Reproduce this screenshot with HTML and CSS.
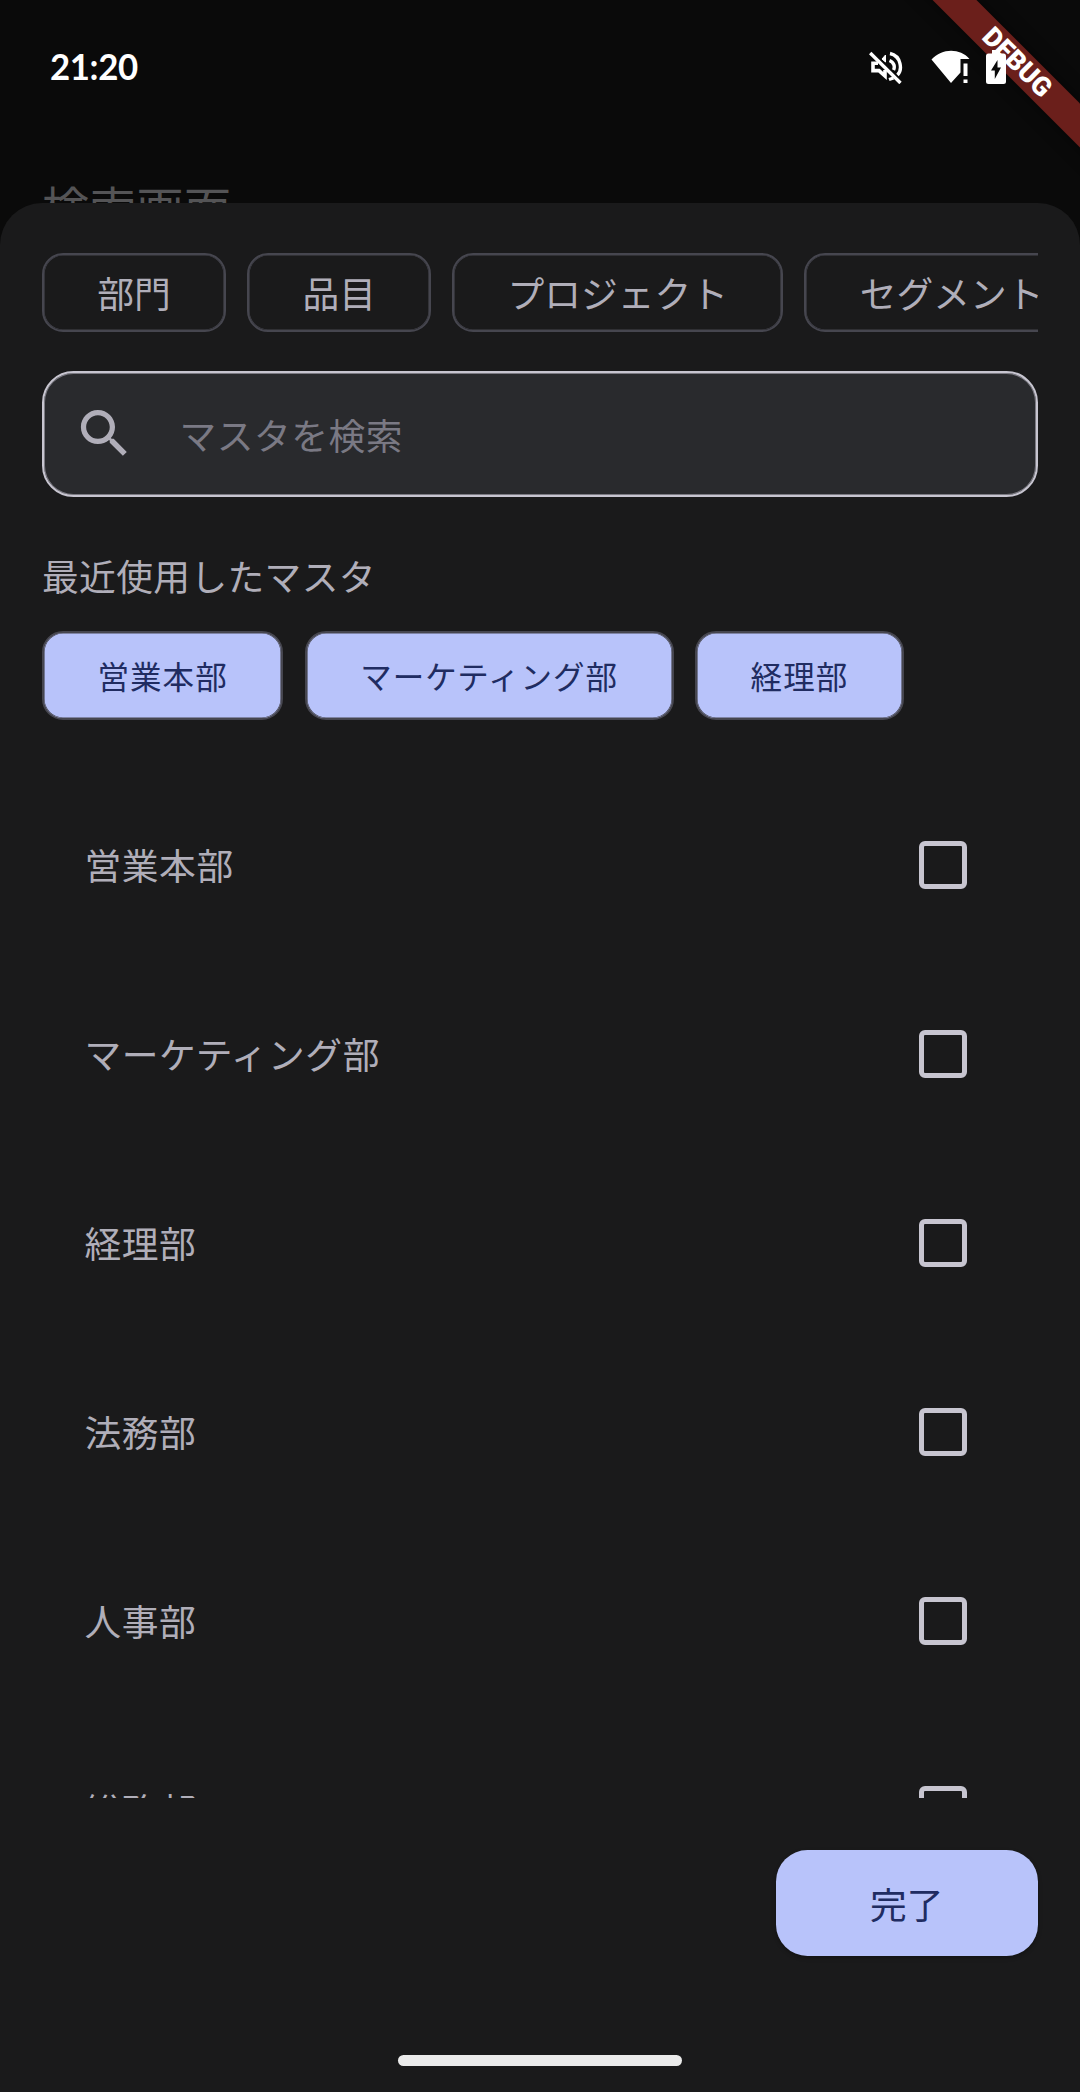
FILE: index.html
```html
<!DOCTYPE html>
<html lang="ja">
<head>
<meta charset="utf-8">
<title>検索画面</title>
<link rel="stylesheet" href="styles.css">
</head>
<body>
<div class="screen">
  <header class="backdrop">
    <div class="status-bar">
      <span class="clock">21:20</span>
      <div class="status-icons">
        <svg class="icon-mute" viewBox="0 0 34 34" width="34" height="34" fill="none" stroke="#fff">
          <path d="M9 13.200H4V20.600H10L16 26V20" stroke-width="3.600"/>
          <path d="M16.500 5V12L13 9Z" fill="#fff" stroke-width="1"/>
          <path d="M21 3.500C32.500 6 33.500 20 28.500 25M20.500 10.500C25.500 12.500 26 17 24.500 20M20 29.500L24.500 28" stroke-width="3.400"/>
          <path d="M1.200 3L31.500 33" stroke-width="3.400"/>
        </svg>
        <svg class="icon-wifi" viewBox="0 0 40 34" width="40" height="34">
          <path fill="#fff" d="M0.500 9.500C11 -2 29 -2 38.500 9H29.500V22.500L20 33Z"/>
          <path fill="#fff" d="M32.500 13.500H36.500V26H32.500ZM32.500 29.500H36.500V33H32.500Z"/>
        </svg>
        <svg class="icon-battery" viewBox="0 0 20 34" width="20" height="34">
          <path fill="#fff" d="M6 0H14V3.500H17.500Q20 3.500 20 6V31.500Q20 34 17.500 34H2.500Q0 34 0 31.500V6Q0 3.500 2.500 3.500H6Z"/>
          <path fill="#0a0a0a" d="M11.500 10L5 20.500H8.800V29L15 17.500H11.500Z"/>
        </svg>
      </div>
    </div>
    <h1 class="page-title">検索画面</h1>
  </header>
  <div class="debug-banner">DEBUG</div>

  <main class="sheet">
    <nav class="tabs">
      <button class="tab">部門</button>
      <button class="tab">品目</button>
      <button class="tab">プロジェクト</button>
      <button class="tab">セグメント</button>
    </nav>
    <label class="search">
      <svg class="search-icon" viewBox="0 0 24 24" width="63" height="63"><path fill="#b0aeb9" d="M15.500 14h-.79l-.28-.27C15.410 12.590 16 11.110 16 9.500 16 5.910 13.090 3 9.500 3S3 5.910 3 9.500 5.910 16 9.500 16c1.610 0 3.090-.59 4.230-1.570l.27.28v.79l5 4.990L20.490 19l-4.990-5zm-6 0C7.010 14 5 11.990 5 9.500S7.010 5 9.500 5 14 7.010 14 9.500 11.990 14 9.500 14z"/></svg>
      <span class="search-hint">マスタを検索</span>
    </label>
    <h2 class="recent-title">最近使用したマスタ</h2>
    <div class="recent">
      <button class="recent-chip">営業本部</button>
      <button class="recent-chip">マーケティング部</button>
      <button class="recent-chip">経理部</button>
    </div>
    <ul class="list">
      <li class="row"><span>営業本部</span><i class="check"></i></li>
      <li class="row"><span>マーケティング部</span><i class="check"></i></li>
      <li class="row"><span>経理部</span><i class="check"></i></li>
      <li class="row"><span>法務部</span><i class="check"></i></li>
      <li class="row"><span>人事部</span><i class="check"></i></li>
      <li class="row"><span>総務部</span><i class="check"></i></li>
    </ul>
    <footer class="actions"><button class="done">完了</button></footer>
    <div class="home-bar"></div>
  </main>
</div>
</body>
</html>
```
FILE: styles.css
```css
* { box-sizing: border-box; }

body {
  margin: 0;
  background: #0a0a0a;
  font-family: "Noto Sans CJK JP", sans-serif;
  font-size: 36.75px;
  line-height: 54px;
  color: #b0aeb9;
}

button {
  font: inherit;
  color: inherit;
  background: none;
  white-space: nowrap;
  flex: none;
}

.screen {
  position: relative;
  width: 1080px;
  height: 2092px;
  overflow: hidden;
  display: flex;
  flex-direction: column;
}

.backdrop { height: 203px; flex: none; overflow: visible; }

.status-bar {
  position: relative;
  z-index: 3;
  height: 132px;
  padding: 0 74px 0 50px;
  display: flex;
  align-items: center;
  justify-content: space-between;
}

.clock {
  font: 700 37px/40px Lato, sans-serif;
  letter-spacing: -.4px;
  transform: scaleX(.94);
  transform-origin: left;
  color: #fff;
}

.status-icons { display: flex; padding-top: 2px; }
.icon-mute { margin-right: 28px; }
.icon-wifi { margin-right: 15px; }

.page-title {
  margin: 44px 0 0 42px;
  font-size: 47px;
  font-weight: 400;
  line-height: 60px;
  letter-spacing: .3px;
  color: #545456;
}

/* Corner ribbon drawn over the page, below the status icons */
.debug-banner {
  position: absolute;
  z-index: 2;
  left: 867px;
  top: 47px;
  width: 300px;
  height: 31px;
  background: #6b1f1b;
  box-shadow: 0 0 16px rgba(0, 0, 0, .5);
  transform: rotate(45deg);
  font: 900 26.8px/31px Roboto, sans-serif;
  text-align: center;
  color: #fff;
}

.sheet {
  position: relative;
  z-index: 1;
  flex: 1;
  min-height: 0;
  padding: 50px 42px 0;
  border-radius: 42px 42px 0 0;
  background: #1a1a1b;
  display: flex;
  flex-direction: column;
}

.tabs {
  flex: none;
  display: flex;
  gap: 21px;
  overflow: hidden;
  height: 79px;
}

.tab {
  border: 2px solid #46464f;
  box-shadow: inset 0 0 0 .6px #46464f;
  border-radius: 21px;
  padding: 0 53.300px 2px;
  height: 79px;
}

.search {
  flex: none;
  display: flex;
  align-items: center;
  height: 126px;
  margin-top: 39px;
  padding-left: 29px;
  border: 2px solid #c7c5d0;
  box-shadow: inset 0 0 0 1px #7b7a82;
  border-radius: 31.500px;
  background: #292a2d;
}

.search-icon { margin-top: -2px; }
.search-hint { margin-left: 43.500px; color: #7a7984; letter-spacing: .5px; }

.recent-title {
  margin: 51px 0 29px;
  font-size: 36.750px;
  font-weight: 400;
  line-height: 54px;
  letter-spacing: .35px;
}

.recent { flex: none; display: flex; gap: 21.500px; }

.recent-chip {
  height: 89px;
  padding: 0 53.500px 2px;
  border: 2px solid #46464f;
  box-shadow: inset 0 0 0 .6px #46464f;
  border-radius: 21px;
  background: #b8c3fa;
  color: #202c61;
  font-size: 31.500px;
  letter-spacing: 1.050px;
}

.list {
  flex: none;
  list-style: none;
  margin: 50px 0 0;
  padding: 0;
  height: 1028px;
  overflow: hidden;
}

.row {
  height: 189px;
  padding: 0 71px 0 42.500px;
  letter-spacing: .55px;
  display: flex;
  align-items: center;
  justify-content: space-between;
}

.row span { padding-bottom: 2px; }

.check {
  width: 48px;
  height: 48px;
  border: 5px solid #c7c5d0;
  border-radius: 6px;
}

.actions {
  flex: none;
  margin-top: 52px;
  display: flex;
  justify-content: flex-end;
}

.done {
  width: 262.500px;
  height: 105.500px;
  border: 0;
  border-radius: 31.500px;
  background: #b8c3fa;
  color: #202c61;
  box-shadow: 0 2px 4px rgba(0, 0, 0, .3);
}

.home-bar {
  flex: none;
  align-self: center;
  width: 284px;
  height: 11px;
  margin-top: 99.500px;
  border-radius: 6px;
  background: #ebebeb;
}
```
